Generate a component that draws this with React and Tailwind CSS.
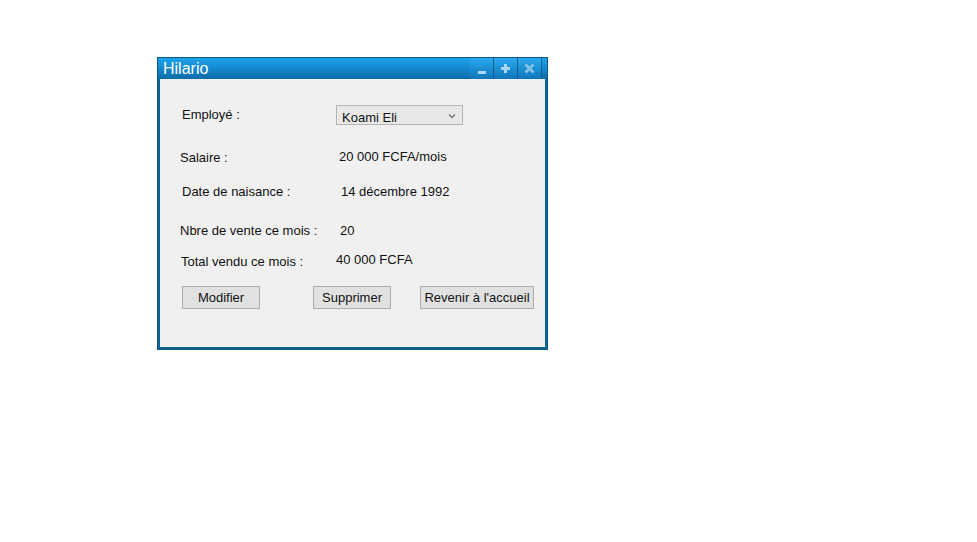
export default function App() {
  const font = { fontFamily: '"Liberation Sans", Arial, sans-serif' };
  return (
    <div className="w-[977px] h-[542px] bg-white pl-[157px] pt-[57px]" style={font}>
      <div className="w-[391px] h-[293px] flex flex-col bg-[#0f6390] border border-[#0b5a86]">
        {/* title bar */}
        <div className="h-[21px] flex items-stretch bg-gradient-to-b from-[#1da2ea] via-[#1489cf] to-[#0c6ba8]">
          <div className="flex-1 pl-[5px] text-white text-[16px] leading-[22px]">Hilario</div>
          <div className="flex items-stretch mr-[5px]">
            <div className="w-[24px] flex items-end justify-center pb-[5px] bg-gradient-to-b from-[#2aaaf0] to-[#0f76b8] border-r border-[#0d5f94]">
              <div className="w-[8px] h-[3px] bg-[#a7d6f2]" />
            </div>
            <div className="w-[24px] flex items-center justify-center bg-gradient-to-b from-[#2aaaf0] to-[#0f76b8] border-r border-[#0d5f94]">
              <svg width="9" height="9" viewBox="0 0 9 9">
                <path d="M3 0h3v3h3v3H6v3H3V6H0V3h3z" fill="#a7d6f2" />
              </svg>
            </div>
            <div className="w-[24px] flex items-center justify-center bg-gradient-to-b from-[#2aaaf0] to-[#0f76b8] border-r border-[#0d5f94]">
              <svg width="11" height="11" viewBox="0 0 11 11">
                <path d="M1.5 1.5l8 8M9.5 1.5l-8 8" stroke="#86c5ea" strokeWidth="2.6" />
              </svg>
            </div>
          </div>
        </div>
        {/* body */}
        <div className="flex-1 mx-[2px] mb-[2px] bg-[#f0f0f0] text-[13px] leading-[15px] text-[#111] pt-[26px]">
          <div className="flex h-[20px]">
            <span className="ml-[22px] w-[154px] mt-[2px]">Employé :</span>
            <div className="w-[127px] h-[20px] bg-[#e8e8e8] border border-[#b4b4b4] flex items-center pl-[5px] pr-[6px] pt-[4px]">
              <span className="flex-1">Koami Eli</span>
              <svg width="8" height="6" viewBox="0 0 8 6" className="mb-[2px]">
                <path d="M1 1.5l3 3 3-3" stroke="#777" strokeWidth="1.4" fill="none" />
              </svg>
            </div>
          </div>
          <div className="flex mt-[24px] h-[16px]">
            <span className="ml-[20px] w-[159px] mt-[1px]">Salaire :</span>
            <span>20 000 FCFA/mois</span>
          </div>
          <div className="flex mt-[19px] h-[16px]">
            <span className="ml-[22px] w-[159px]">Date de naisance :</span>
            <span>14 décembre 1992</span>
          </div>
          <div className="flex mt-[23px] h-[16px]">
            <span className="ml-[20px] w-[160px]">Nbre de vente ce mois :</span>
            <span>20</span>
          </div>
          <div className="flex mt-[13px] h-[17px]">
            <span className="ml-[21px] w-[155px] mt-[2px]">Total vendu ce mois :</span>
            <span>40 000 FCFA</span>
          </div>
          <div className="flex mt-[17px]">
            <button className="ml-[22px] w-[78px] h-[23px] bg-[#e1e1e1] border border-[#adadad] leading-[22px] text-[13px]">Modifier</button>
            <button className="ml-[53px] w-[78px] h-[23px] bg-[#e1e1e1] border border-[#adadad] leading-[22px] text-[13px]">Supprimer</button>
            <button className="ml-[29px] w-[114px] h-[23px] bg-[#e1e1e1] border border-[#adadad] leading-[22px] text-[13px]">Revenir à l'accueil</button>
          </div>
        </div>
      </div>
    </div>
  );
}
